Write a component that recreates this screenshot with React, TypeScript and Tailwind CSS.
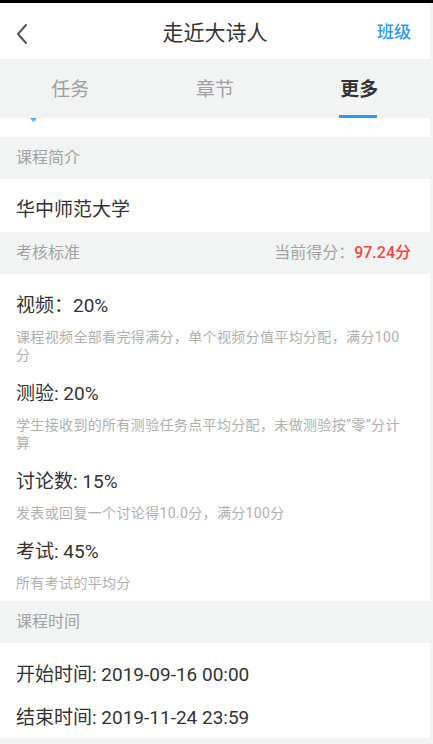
import React from 'react';

const rules = [
    { title: '视频：20%', desc: '课程视频全部看完得满分，单个视频分值平均分配，满分100分' },
    { title: '测验: 20%', desc: '学生接收到的所有测验任务点平均分配，未做测验按“零”分计算' },
    { title: '讨论数: 15%', desc: '发表或回复一个讨论得10.0分，满分100分' },
    { title: '考试: 45%', desc: '所有考试的平均分' },
];

function SectionHeader({ children }: { children: React.ReactNode }) {
    return (
        <div className="flex h-[42px] items-center justify-between bg-[#f2f4f4] pl-4 pr-[19px] text-[16px] text-[#a3a3a3]">
            {children}
        </div>
    );
}

export default function App() {
    return (
        <div
            className="flex h-[744px] w-[433px] flex-col overflow-hidden bg-[#f2f4f4]"
            style={{ fontFamily: 'Roboto, "Noto Sans CJK SC", sans-serif' }}
        >
            <div className="h-[3px] bg-black" />
            <div className="flex w-[430px] flex-col bg-white">
                {/* top bar */}
                <div className="relative flex h-[56px] items-start justify-center pt-[16px]">
                    <svg className="absolute left-[15px] top-[20px]" width="14" height="22" viewBox="0 0 14 22" fill="none" stroke="#555" strokeWidth="2" strokeLinecap="round" strokeLinejoin="round">
                        <polyline points="11 2 3 11 11 20" />
                    </svg>
                    <span className="text-[21px] leading-7 text-[#333]">走近大诗人</span>
                    <span className="absolute right-[19px] top-[17px] text-[17px] leading-6 font-medium text-[#2b9bf1]">班级</span>
                </div>

                {/* tabs */}
                <div className="grid h-[59px] grid-cols-3 bg-[#f2f4f4]">
                    <div className="flex items-start justify-center pt-[19px] text-[19px] leading-6 text-[#a0a0a0]">
                        <span className="-ml-[3px]">任务</span>
                    </div>
                    <div className="flex items-start justify-center pt-[19px] text-[19px] leading-6 text-[#a0a0a0]">章节</div>
                    <div className="relative flex items-start justify-center pt-[19px] text-[19px] leading-6 font-bold text-[#333]">
                        <span className="ml-[2px]">更多</span>
                        <div className="absolute bottom-0 left-[52px] h-[3px] w-[38px] bg-[#2b9bf1]" />
                    </div>
                </div>

                <div className="h-[19px] pl-[30px]">
                    <svg width="7" height="4" viewBox="0 0 7 4">
                        <polygon points="0 0 7 0 3.5 4" fill="#5aaef0" />
                    </svg>
                </div>

                <SectionHeader>课程简介</SectionHeader>
                <div className="h-[53px] px-4 pt-[19px] text-[19px] leading-6 text-[#333]">华中师范大学</div>

                <SectionHeader>
                    <span>考核标准</span>
                    <span>
                        当前得分：<span className="font-medium text-[#f2483b]">97.24分</span>
                    </span>
                </SectionHeader>

                <div className="flex flex-col gap-[18px] pb-[9px] pl-4 pr-[22px] pt-[20px]">
                    {rules.map((r, i) => (
                        <div key={i} className="flex flex-col gap-[10px]">
                            <div className="text-[19px] leading-6 text-[#333]">{r.title}</div>
                            <div className="text-[14px] leading-[18px] tracking-[0.35px] text-[#b0b0b0]">{r.desc}</div>
                        </div>
                    ))}
                </div>

                <SectionHeader>课程时间</SectionHeader>
                <div className="flex flex-col gap-[19px] px-4 pb-[8px] pt-[20px] text-[19px] leading-6 text-[#333]">
                    <div>开始时间: 2019-09-16 00:00</div>
                    <div>结束时间: 2019-11-24 23:59</div>
                </div>
            </div>
        </div>
    );
}
